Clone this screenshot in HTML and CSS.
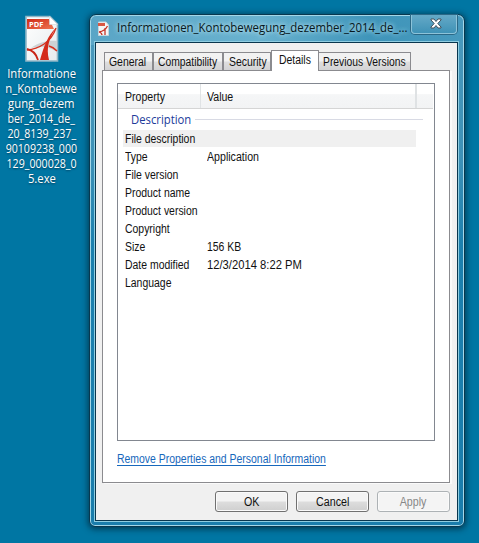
FILE: index.html
```html
<!DOCTYPE html>
<html lang="en">
<head>
<meta charset="utf-8">
<title>Properties</title>
<link rel="stylesheet" href="styles.css">
</head>
<body>
<svg width="0" height="0" class="defs">
  <defs>
    <linearGradient id="red" x1="0" y1="0" x2="1" y2="1"><stop offset="0" stop-color="#cf2a16"/><stop offset="1" stop-color="#ee7652"/></linearGradient>
    <linearGradient id="paper" x1="0" y1="0" x2="1" y2="1"><stop offset="0" stop-color="#fff"/><stop offset="1" stop-color="#e6ebee"/></linearGradient>
  </defs>
</svg>
<div class="desktop">
  <div class="shortcut">
    <svg class="file-icon" width="34" height="48" viewBox="0 0 34 48">
      <path d="M1 1.500H25L32.500 9V46H1Z" fill="url(#paper)" stroke="#91b7c7" stroke-width="1.600"/>
      <path d="M6 33C14 27 24 25 32 26V37C23 31 15 31 6 33Z" fill="#cdd2d5"/>
      <path d="M2 35C13 34 26 28 31 13" fill="none" stroke="#d6301d" stroke-width="1.300"/>
      <path d="M31 13C23 20 19 31 15 45H24C21 33 24 23 31 13Z" fill="#d42b1b"/>
      <path d="M2 34C7 35 11 38 13 45" fill="none" stroke="#c92618" stroke-width="1.800"/>
      <path d="M24 31C28 32 30 34 32 36" fill="none" stroke="#d6301d" stroke-width="1.400"/>
      <path d="M2 4H24L29 14H2Z" fill="url(#red)"/>
      <path d="M24.500 1.500V9.500H32.500Z" fill="#fff" stroke="#cbd7dc" stroke-width=".6"/>
      <text x="4" y="12" class="pdf">PDF</text>
    </svg>
    <div class="label"><span>Informatione</span><span>n_Kontobewe</span><span>gung_dezem</span><span class="digits">ber_2014_de_</span><span class="digits">20_8139_237_</span><span class="digits">90109238_000</span><span class="digits">129_000028_0</span><span>5.exe</span></div>
  </div>
  <div class="window">
    <div class="titlebar">
      <svg class="mini" width="13" height="16" viewBox="0 0 13 16">
        <path d="M1.500 1H9L11.500 4V14.500H1.500Z" fill="#f5f5f5" stroke="#c5d5dd"/>
        <path d="M1 2H8V5H1Z" fill="#d95743"/>
        <path d="M2 11Q8 10 10.500 5M8 7L8 14M2 11Q5 12 5 14" fill="none" stroke="#c83427" stroke-width="1.300"/>
      </svg>
      <div class="title"><span>Informationen_Kontobewegung_dezember_2014_de_...</span></div>
      <div class="close"><svg width="12" height="11" viewBox="0 0 12 11"><path d="M1 1H4L6 3.500 8 1H11V2L7.800 5.500 11 9V10H8L6 7.500 4 10H1V9L4.200 5.500 1 2Z" fill="#fff" stroke="#43515c"/></svg></div>
    </div>
    <div class="client">
      <div class="tabs">
        <div class="tab t1"><span>General</span></div>
        <div class="tab t2"><span>Compatibility</span></div>
        <div class="tab t3"><span>Security</span></div>
        <div class="tab t4 active"><span>Details</span></div>
        <div class="tab t5"><span>Previous Versions</span></div>
      </div>
      <div class="panel">
        <div class="list">
          <div class="head"><div class="hc"><span>Property</span></div><div class="hv"><span>Value</span></div></div>
          <div class="group"><div class="gname"><span>Description</span></div><i></i></div>
          <div class="row sel"><b><span>File description</span></b></div>
          <div class="row"><b><span>Type</span></b><span class="wide">Application</span></div>
          <div class="row"><b><span>File version</span></b></div>
          <div class="row"><b><span>Product name</span></b></div>
          <div class="row"><b><span>Product version</span></b></div>
          <div class="row"><b><span>Copyright</span></b></div>
          <div class="row"><b><span>Size</span></b><span>156 KB</span></div>
          <div class="row"><b><span>Date modified</span></b><span class="date">12/3/2014 8:22 PM</span></div>
          <div class="row"><b><span>Language</span></b></div>
        </div>
        <a class="link"><span>Remove Properties and Personal Information</span></a>
      </div>
      <div class="buttons">
        <div class="btn"><span>OK</span></div>
        <div class="btn"><span>Cancel</span></div>
        <div class="btn off"><span>Apply</span></div>
      </div>
    </div>
  </div>
</div>
</body>
</html>
```
FILE: styles.css
```css
* { box-sizing: border-box; }
body { margin: 0; }
.defs { position: absolute; }
.desktop {
  width: 479px; height: 543px; overflow: hidden;
  display: flex; align-items: flex-start;
  background: #0076a3;
  font: 12px/16px "Liberation Sans", Arial, sans-serif; color: #111;
}
.desktop span { display: inline-block; white-space: nowrap; transform-origin: 0 50%; }
.shortcut { width: 83px; margin-right: 6px; padding-top: 15px; flex: none; }
.file-icon { display: block; margin-left: 25px; }
.pdf { font: bold 7.5px "Open Sans", sans-serif; fill: #fff; }
.label {
  display: flex; flex-direction: column; align-items: center;
  margin-top: 3px; color: #fff;
  font: 12px/15px "Open Sans", sans-serif;
  text-shadow: 0 1px 2px #003d5c;
}
.label span { transform-origin: 50% 50%; transform: scaleX(.94); }
.label .digits { transform: scaleX(.885); }
.window {
  width: 376px; height: 513px; margin-top: 14px; padding: 1px 5px 6px; flex: none;
  border: 1px solid #08384f; border-radius: 7px 7px 6px 6px;
  background: linear-gradient(90deg, #5aa5c6 0, #69b2cf 45%, #3f95ba 75%, #4799bd) 0 0 / 100% 30px no-repeat,
    linear-gradient(#4b9abd 0, #3d91b7 28%, #1c80ae 45%, #1a7dac);
  box-shadow: inset 0 0 0 1px #a4d7e8, 0 1px 6px 1px rgba(0,25,40,.65);
}
.titlebar { height: 26px; display: flex; align-items: flex-start; }
.mini { margin: 5px 7px 0 2px; flex: none; }
.title { width: 290px; margin-top: 4px; font: 12px/16px "Open Sans", sans-serif; color: #071820; text-shadow: 0 0 5px #b3dcec, 0 0 6px #b3dcec; }
.title span { transform: scaleX(.95); }
.close {
  width: 46px; height: 19px; margin: -1px 0 0 4px; flex: none;
  display: flex; justify-content: center; padding: 3px 0 0 3px;
  border: 1px solid #8cc3d9; border-top: 0; border-radius: 0 0 4px 4px;
  background: linear-gradient(#65a9c7, #3f92b6);
  box-shadow: 0 0 0 1px #2b6886;
}
.client {
  height: 479px; width: 363px; padding: 7px 6px 0; border: 1px solid #09364e;
  background: #f0f0f0; box-shadow: 0 0 0 1px #8fcde1;
}
.tabs { display: flex; align-items: flex-end; height: 20px; padding-left: 2px; }
.tab {
  height: 18px; border: 1px solid #8b8b8f; border-bottom: 0; padding-left: 5px; line-height: 18px;
  background: linear-gradient(#f2f2f2 45%, #dedede 55%, #d3d3d5); flex: none;
}
.t1 { width: 49px; padding-left: 4px; }
.t2 { width: 70px; padding-left: 4px; }
.t3 { width: 48px; }
.t4 { width: 48px; }
.t5 { width: 92px; border-left: 0; padding-left: 4px; }
.tab.active { height: 21px; margin-bottom: -1px; background: #fff; z-index: 1; padding-left: 7px; }
.panel { width: 348px; height: 413px; border: 1px solid #8b8b8f; background: #fff; padding: 12px 0 0 14px; box-shadow: 2px 1px 0 #fafafa; }
.list { width: 318px; height: 358px; border: 1px solid #828790; }
.head { height: 25px; display: flex; line-height: 26px; border-bottom: 1px solid #d5d5d5; background: linear-gradient(#fff 42%, #f5f6f7 44%, #f2f3f4); margin-right: 1px; }
.hc { width: 83px; padding-left: 7px; border-right: 1px solid #e0e3e5; }
.hv { width: 216px; padding-left: 6px; border-right: 2px solid #dfe2e4; }
.group { display: flex; align-items: center; height: 21px; padding: 0 11px 0 13px; }
.group i { flex: 1; height: 1px; background: #d8dae4; }
.gname { width: 64px; color: #203a9a; font: 12px/18px "Open Sans", sans-serif; }
.gname span { transform: scaleX(.94); }
.row { display: flex; width: 293px; height: 18px; margin-left: 5px; padding-left: 2px; line-height: 18px; }
.row b { width: 82px; font-weight: normal; }
.sel { background: linear-gradient(#f0f0f0, #f0f0f0) 0 0 / 100% 17px no-repeat; }
.link { display: block; margin-top: 10px; color: #1768bc; }
.link span { text-decoration: underline; text-underline-offset: 2px; }
.buttons { display: flex; gap: 8px; margin: 8px 0 0 113px; }
.btn {
  width: 73px; height: 21px; border: 1px solid #707070; border-radius: 3px; text-align: center; line-height: 20px;
  background: linear-gradient(#f3f3f3 48%, #dddddd 52%, #cfcfcf); box-shadow: inset 0 0 0 1px #fafafa;
}
.desktop .btn span { transform-origin: 50% 50%; transform: scaleX(.89); }
.off { border-color: #adb2b5; background: #f4f4f4; color: #878787; }
.tab span, .head span, .row span, .link span { transform: scaleX(.87); }
.tab.t2 span, .tab.t5 span { transform: scaleX(.86); }
.row .wide { transform: scaleX(.885); }
.row .date { transform: scaleX(.935); }
.head span { transform: scaleX(.88); }
```
